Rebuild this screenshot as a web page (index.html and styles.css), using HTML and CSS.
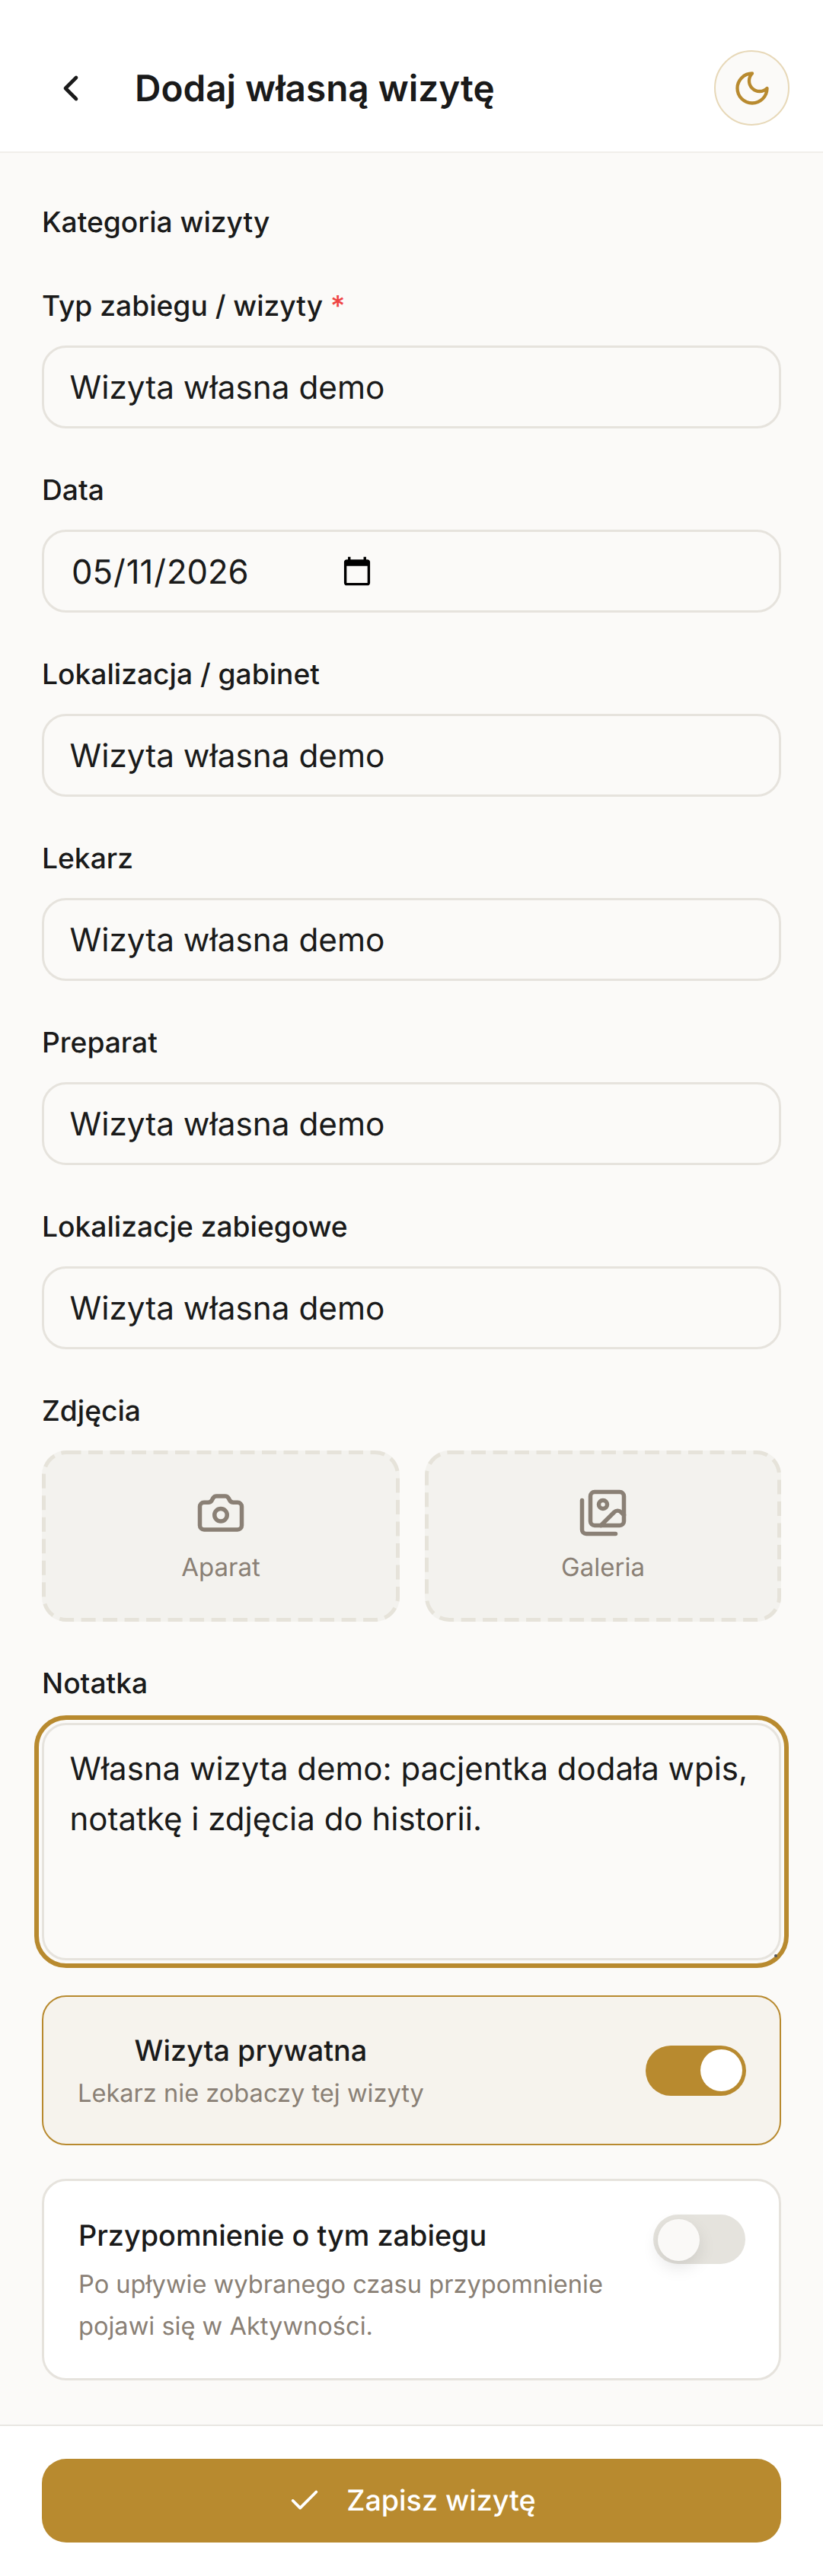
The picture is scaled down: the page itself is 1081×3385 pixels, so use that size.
FILE: index.html
```html
<!DOCTYPE html>
<html lang="pl">
<head>
<meta charset="utf-8">
<title>Dodaj własną wizytę</title>
<link rel="stylesheet" href="styles.css">
</head>
<body>
<div class="page">
  <header class="topbar">
    <button class="back" type="button" aria-label="Wstecz">
      <svg class="icon-back" viewBox="0 0 24 24"><path d="m15 18-6-6 6-6"/></svg>
    </button>
    <h1 class="title">Dodaj własną wizytę</h1>
    <button class="theme" type="button" aria-label="Motyw">
      <svg class="icon-moon" viewBox="0 0 24 24"><path d="M12 3a6 6 0 0 0 9 9 9 9 0 1 1-9-9Z"/></svg>
    </button>
  </header>

  <main class="form">
    <div class="category">Kategoria wizyty</div>

    <div class="fields">
      <div class="field">
        <label class="label">Typ zabiegu / wizyty <span class="req">*</span></label>
        <input class="input" type="text" value="Wizyta własna demo">
      </div>
      <div class="field">
        <label class="label">Data</label>
        <input class="input input-date" type="date" value="2026-05-11">
      </div>
      <div class="field">
        <label class="label">Lokalizacja / gabinet</label>
        <input class="input" type="text" value="Wizyta własna demo">
      </div>
      <div class="field">
        <label class="label">Lekarz</label>
        <input class="input" type="text" value="Wizyta własna demo">
      </div>
      <div class="field">
        <label class="label">Preparat</label>
        <input class="input" type="text" value="Wizyta własna demo">
      </div>
      <div class="field">
        <label class="label">Lokalizacje zabiegowe</label>
        <input class="input" type="text" value="Wizyta własna demo">
      </div>
      <div class="field">
        <label class="label">Zdjęcia</label>
        <div class="uploads">
          <button class="upload" type="button">
            <svg class="dash"><rect class="dash-rect" rx="30" ry="30"/></svg>
            <svg class="icon-upload" viewBox="0 0 24 24">
              <path d="M13.997 4a2 2 0 0 1 1.76 1.05l.486.9A2 2 0 0 0 18.003 7H20a2 2 0 0 1 2 2v9a2 2 0 0 1-2 2H4a2 2 0 0 1-2-2V9a2 2 0 0 1 2-2h1.997a2 2 0 0 0 1.759-1.048l.489-.904A2 2 0 0 1 10.004 4z"/>
              <circle cx="12" cy="13" r="3"/>
            </svg>
            <span class="upload-text">Aparat</span>
          </button>
          <button class="upload" type="button">
            <svg class="dash"><rect class="dash-rect" rx="30" ry="30"/></svg>
            <svg class="icon-upload" viewBox="0 0 24 24">
              <path d="M18 22H4a2 2 0 0 1-2-2V6"/>
              <path d="m22 13-1.296-1.296a2.41 2.41 0 0 0-3.408 0L11 18"/>
              <circle cx="12" cy="8" r="2"/>
              <rect x="6" y="2" width="16" height="16" rx="2"/>
            </svg>
            <span class="upload-text">Galeria</span>
          </button>
        </div>
      </div>
      <div class="field">
        <label class="label">Notatka</label>
        <div class="note-wrap">
          <textarea class="note">Własna wizyta demo: pacjentka dodała wpis, notatkę i zdjęcia do historii.</textarea>
        </div>
      </div>
    </div>

    <section class="card card-private">
      <div class="private-text">
        <div class="card-title">Wizyta prywatna</div>
        <div class="card-sub">Lekarz nie zobaczy tej wizyty</div>
      </div>
      <span class="toggle toggle-on"><span class="knob"></span></span>
    </section>

    <section class="card card-reminder">
      <div class="reminder-text">
        <div class="card-title">Przypomnienie o tym zabiegu</div>
        <div class="card-sub card-sub-long">Po upływie wybranego czasu przypomnienie pojawi się w Aktywności.</div>
      </div>
      <span class="toggle toggle-off"><span class="knob"></span></span>
    </section>
  </main>

  <footer class="footer">
    <button class="save" type="button">
      <svg class="icon-check" viewBox="0 0 24 24"><path d="M20 6 9 17l-5-5"/></svg>
      <span>Zapisz wizytę</span>
    </button>
  </footer>
</div>
</body>
</html>
```
FILE: styles.css
```css
* { box-sizing: border-box; text-rendering: geometricPrecision; }
html, body { margin: 0; padding: 0; }
body {
  background: #fbfaf8;
  color: #1a1a1a;
  font-family: Inter, "Liberation Sans", sans-serif;
}
button { font-family: inherit; }
svg { fill: none; stroke: currentColor; stroke-linecap: round; stroke-linejoin: round; display: block; }

.page { display: flex; flex-direction: column; height: 3385px; overflow: hidden; }

.topbar {
  height: 201px;
  flex: none;
  background: #fff;
  border-bottom: 2px solid #f1efeb;
  display: flex;
  align-items: center;
  padding: 66px 44px 34px 65px;
}
.back {
  width: 56px; height: 56px; padding: 0; border: 0; background: none; color: #1a1a1a; flex: none;
}
.icon-back { width: 56px; height: 56px; stroke-width: 2; }
.title {
  margin: 0 0 0 56px;
  font-size: 47.7px;
  font-weight: 600;
  line-height: 60px;
  flex: 1;
}
.theme {
  width: 99px; height: 99px; padding: 0; flex: none;
  border-radius: 50%;
  border: 2.5px solid #e7d8b8;
  background: #fbfaf8;
  color: #b88a2f;
  display: flex; align-items: center; justify-content: center;
}
.icon-moon { width: 52px; height: 52px; stroke-width: 2; }

.form { flex: 1; padding: 66px 55px 58px; display: flex; flex-direction: column; }
.category { font-size: 37.2px; line-height: 49px; font-weight: 450; margin-bottom: 61px; }
.fields { display: flex; flex-direction: column; gap: 56px; }
.label { display: block; font-size: 37.2px; line-height: 49px; font-weight: 450; margin-bottom: 28px; }
.req { color: #ef4444; }

.input {
  display: block;
  width: 100%;
  height: 109px;
  padding: 2px 34px 0 33.5px;
  border: 3px solid #e6e3dd;
  border-radius: 32px;
  background: #fbfaf8;
  color: #1a1a1a;
  font-family: inherit;
  font-size: 42.3px;
  outline: none;
}
.input-date { padding: 2px 530px 0 35px; font-size: 43.6px; }

.uploads { display: grid; grid-template-columns: 470px 468px; gap: 33px; }
.upload {
  position: relative;
  height: 225px;
  border: 0;
  border-radius: 32px;
  background: #f3f2ee;
  color: #8a8075;
  padding: 0;
  display: flex; flex-direction: column; align-items: center; justify-content: center;
}
.dash { position: absolute; inset: 0; width: 100%; height: 100%; color: #e6e3da; }
.dash-rect {
  x: 2.5px; y: 2.5px;
  width: calc(100% - 5px);
  height: calc(100% - 5px);
  stroke-width: 5;
  stroke-dasharray: 19 9.5;
  stroke-linecap: butt;
}
.icon-upload { width: 66px; height: 66px; stroke-width: 2; margin-bottom: 15px; }
.upload-text { font-size: 33px; line-height: 46px; font-weight: 400; }

.note-wrap { position: relative; }
.note-wrap::after {
  content: "";
  position: absolute;
  right: 5px; bottom: 4px;
  width: 4px; height: 4px;
  border-radius: 50%;
  background: #555;
}
.note {
  display: block;
  width: 100%;
  height: 312px;
  padding: 25px 12px 25px 33.5px;
  border: 3px solid #e6e3dd;
  border-radius: 32px;
  background: #fbfaf8;
  color: #1a1a1a;
  font-family: inherit;
  font-size: 42px;
  line-height: 66px;
  resize: none;
  outline: 6.5px solid #b88a2f;
  outline-offset: 4px;
}

.card { border-radius: 32px; display: flex; justify-content: space-between; }
.card-private {
  margin-top: 46px;
  height: 197px;
  background: #f6f3ed;
  border: 2.5px solid #b88a2f;
  padding: 0 44px 0 45px;
  align-items: center;
}
.private-text { text-align: center; }
.card-reminder {
  margin-top: 44px;
  height: 265px;
  background: #fff;
  border: 3px solid #e6e3dd;
  padding: 46px 44px 0 45px;
}
.card-title { font-size: 37.8px; line-height: 52px; font-weight: 500; }
.card-sub { font-size: 32.6px; line-height: 46px; color: #8a8075; margin-top: 6px; }
.card-sub-long { line-height: 55px; margin-top: 10px; }
.reminder-text { width: 720px; }
.card-reminder .toggle { margin-top: -2px; }

.toggle { display: block; position: relative; border-radius: 34px; flex: none; }
.knob { position: absolute; top: 5.5px; width: 55px; height: 55px; border-radius: 50%; }
.toggle-on { width: 132px; height: 66px; background: #b88a2f; }
.toggle-on .knob { right: 5.5px; background: #fff; }
.toggle-off { width: 121px; height: 65px; background: #e5e3dd; }
.toggle-off .knob { left: 5.5px; background: #faf9f7; box-shadow: 0 9px 22px rgba(0, 0, 0, 0.1); }

.footer {
  height: 199px;
  flex: none;
  background: #fff;
  border-top: 2.5px solid #e8e6e2;
  padding: 43px 55px 0;
}
.save {
  width: 100%;
  height: 110px;
  border: 0;
  border-radius: 32px;
  background: #b88a2f;
  color: #fff;
  font-size: 37.7px;
  font-weight: 500;
  display: flex; align-items: center; justify-content: center; gap: 32px;
}
.icon-check { width: 46px; height: 46px; stroke-width: 2; }
```
